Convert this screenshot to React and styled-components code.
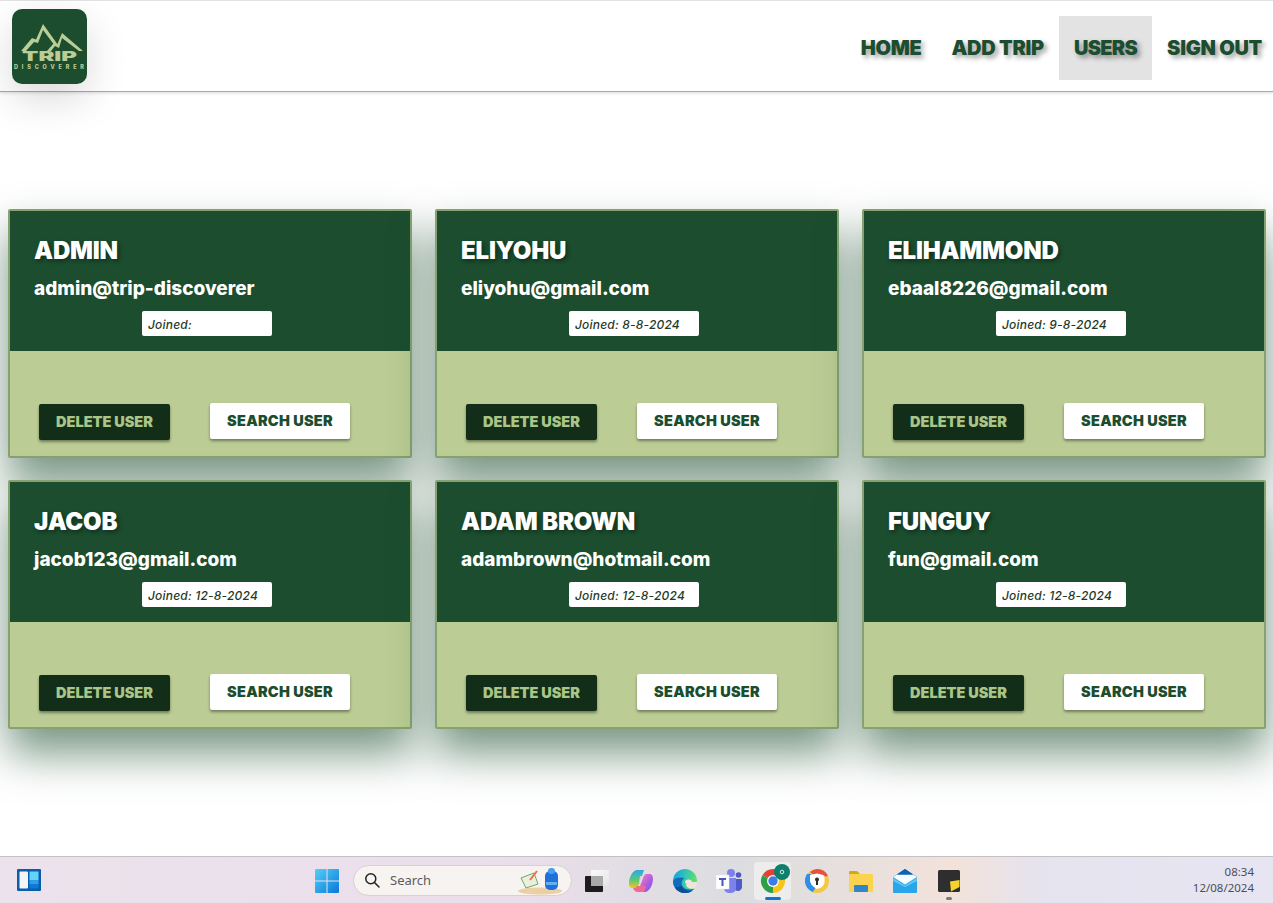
import React from 'react';
import styled, { createGlobalStyle } from 'styled-components';

const GlobalStyle = createGlobalStyle`
  html, body { margin: 0; padding: 0; background: #fff; }
  body { font-family: "Inter", "Liberation Sans", sans-serif; overflow: hidden; }
`;

const Page = styled.div`
  width: 1273px;
  height: 903px;
  display: flex;
  flex-direction: column;
  overflow: hidden;
  background: #fff;
`;

// Navbar
const Navbar = styled.header`
  height: 90px;
  flex: none;
  display: flex;
  justify-content: space-between;
  align-items: flex-start;
  border-top: 1px solid #e2e2e2;
  border-bottom: 1px solid #a9a9a9;
  box-shadow: 0 1px 3px rgba(0, 0, 0, 0.15);
  background: #fff;
  position: relative;
`;
const LogoBox = styled.div`
  width: 75px;
  height: 75px;
  margin: 8px 0 0 12px;
  border-radius: 10px;
  background: #1b4d2e;
  box-shadow: 0 15px 40px rgba(0, 0, 0, 0.15);
`;
const NavLinks = styled.nav`
  display: flex;
  margin: 15px -4px 0 0;
`;
const NavLink = styled.a`
  height: 64px;
  padding: 0 15px;
  display: flex;
  align-items: center;
  font-size: 20px;
  font-weight: 900;
  letter-spacing: ${props => props.$spacing};
  color: #1b4d2e;
  text-shadow: 3px 3px 5px rgba(0, 0, 0, 0.4);
  white-space: nowrap;
  background: ${props => (props.$active ? '#e3e3e3' : 'transparent')};
`;

// Users
const Main = styled.main`
  flex: 1;
  padding: 117px 7px 0 8px;
`;
const UserGrid = styled.div`
  display: grid;
  grid-template-columns: repeat(3, 404px);
  column-gap: 23px;
  row-gap: 22px;
`;
const Card = styled.article`
  height: 249px;
  box-sizing: border-box;
  display: flex;
  flex-direction: column;
  border: 2px solid #87a270;
  border-radius: 2px;
  background: #bbcd94;
  box-shadow: 0 24px 44px rgba(27, 77, 46, 0.6);
`;
const CardHead = styled.div`
  height: 140px;
  flex: none;
  box-sizing: border-box;
  padding: 27px 0 0 24px;
  background: #1b4d2e;
`;
const UserName = styled.h2`
  margin: 0;
  height: 26px;
  line-height: 26px;
  font-size: 24px;
  font-weight: 900;
  letter-spacing: -0.2px;
  color: #fff;
  text-shadow: 2px 2px 4px rgba(0, 0, 0, 0.4);
`;
const UserEmail = styled.p`
  margin: 13px 0 0;
  height: 24px;
  line-height: 24px;
  font-size: 19px;
  font-weight: 800;
  color: #fff;
`;
const Joined = styled.div`
  width: 130px;
  height: 25px;
  margin: 10px 0 0 108px;
  box-sizing: border-box;
  padding: 1px 0 0 6px;
  display: flex;
  align-items: center;
  border-radius: 2px;
  background: #fff;
  font-size: 12px;
  font-style: italic;
  font-weight: 500;
  letter-spacing: 0.2px;
  white-space: pre;
  color: #1f3a28;
`;
const CardActions = styled.div`
  flex: 1;
  display: flex;
  align-items: flex-start;
  padding: 52px 0 0 29px;
`;
const ActionButton = styled.button`
  width: ${props => (props.$danger ? 131 : 140)}px;
  height: 36px;
  margin: ${props => (props.$danger ? '1px 40px 0 0' : '0')};
  border: none;
  border-radius: 2px;
  padding: 0 0 2px;
  font-family: inherit;
  font-size: 14.5px;
  font-weight: 900;
  letter-spacing: ${props => (props.$danger ? '0' : '0.25px')};
  color: ${props => (props.$danger ? '#a9c587' : '#1b4d2e')};
  background: ${props => (props.$danger ? '#132e18' : '#fff')};
  box-shadow: 0 2px 3px rgba(0, 0, 0, 0.4);
`;

// Windows taskbar
const Taskbar = styled.footer`
  height: 47px;
  flex: none;
  box-sizing: border-box;
  display: flex;
  align-items: center;
  padding-left: 306px;
  position: relative;
  border-top: 1px solid #c4c0c4;
  background: linear-gradient(90deg, #ebe2ec 0%, #eadeea 40%, #dcdde0 58%, #f2e2da 75%, #e5e3ee 82%, #e6e5f1 100%);
`;
const WidgetSlot = styled.div`
  position: absolute;
  left: 17px;
  top: 12px;
  display: flex;
`;
const Slot = styled.div`
  width: 44px;
  height: 44px;
  flex: none;
  display: flex;
  align-items: center;
  justify-content: center;
  position: relative;
  margin-top: 1px;
`;
const StartSlot = styled(Slot)`
  width: 47px;
  justify-content: flex-start;
  padding-left: 9px;
  box-sizing: border-box;
`;
const ActiveSlot = styled(Slot)`
  &::before {
    content: '';
    position: absolute;
    left: 3px;
    top: 3px;
    width: 35px;
    height: 38px;
    border-radius: 4px;
    background: rgba(255, 255, 255, 0.45);
    box-shadow: 2px 0 0 rgba(255, 255, 255, 0.4);
  }
  &::after {
    content: '';
    position: absolute;
    left: 14px;
    bottom: 3px;
    width: 16px;
    height: 3px;
    border-radius: 2px;
    background: #0a74d6;
  }
  svg { position: relative; }
`;
const RunningDot = styled.span`
  position: absolute;
  left: 19px;
  bottom: 3px;
  width: 6px;
  height: 3px;
  border-radius: 2px;
  background: #7b7b7b;
`;
const SearchBox = styled.div`
  width: 219px;
  height: 31px;
  flex: none;
  box-sizing: border-box;
  display: flex;
  align-items: center;
  padding-left: 10px;
  margin-right: 3px;
  border: 1px solid #d6d2d2;
  border-radius: 16px;
  background: #f7f3f1;
  font-family: "Noto Sans", sans-serif;
  font-size: 13px;
  color: #5c5c5c;
  position: relative;
`;
const SearchLabel = styled.span`
  margin-left: 10px;
`;
const SearchArt = styled.svg`
  position: absolute;
  right: 5px;
  top: 1px;
`;
const Clock = styled.div`
  position: absolute;
  right: 19px;
  top: 7px;
  text-align: right;
  font-family: "Noto Sans", sans-serif;
  font-size: 11.5px;
  line-height: 16px;
  color: #4e4e55;
`;

const Logo = () => (
  <svg width="75" height="75" viewBox="0 0 75 75">
    <path fill="#bbcd94" d="M9 42 L20 29 L24 30.500 L31 15 L46 36 L43 37 L31 21 L26 34 L22 33 L14 42 Z" />
    <path fill="#bbcd94" d="M35 42 L42 34 L45 36 L50 24 L71 42 L67 42 L50 29 L47 39 L43 37 L39 42 Z" />
    <text x="37.5" y="52" textAnchor="middle" fontFamily="Inter, sans-serif" fontWeight="900" fontSize="13.500" textLength="55" lengthAdjust="spacingAndGlyphs" fill="#bbcd94">TRIP</text>
    <text x="37" y="60" textAnchor="middle" fontFamily="Inter, sans-serif" fontWeight="800" fontSize="5.500" textLength="70" lengthAdjust="spacing" fill="#bbcd94">DISCOVERER</text>
  </svg>
);

const WidgetsIcon = () => (
  <svg width="24" height="22" viewBox="0 0 24 22">
    <rect width="24" height="22" rx="1" fill="#0b5cab" />
    <rect x="2.5" y="2.5" width="8.5" height="17" rx="1" fill="#f4f4f6" />
    <rect x="12.5" y="2.5" width="9" height="9" fill="#62d3fb" />
    <rect x="12.5" y="11.5" width="9" height="4" fill="#2aa0ee" />
    <rect x="12.5" y="15.5" width="9" height="4" fill="#0d78d8" />
  </svg>
);

const WindowsIcon = () => (
  <svg width="24" height="24" viewBox="0 0 24 24">
    <defs>
      <linearGradient id="win" x1="0" y1="0" x2="1" y2="1">
        <stop offset="0" stopColor="#52d0f8" />
        <stop offset="1" stopColor="#0a78d8" />
      </linearGradient>
    </defs>
    <path fill="url(#win)" d="M0 1a1 1 0 0 1 1-1h10.500v11.500H0zM12.500 0H23a1 1 0 0 1 1 1v10.500H12.500zM0 12.500h11.500V24H1a1 1 0 0 1-1-1zM12.500 12.500H24V23a1 1 0 0 1-1 1H12.500z" />
  </svg>
);

const SearchIcon = () => (
  <svg width="16" height="16" viewBox="0 0 16 16" fill="none" stroke="#222" strokeWidth="1.5">
    <circle cx="6.8" cy="6.8" r="5" />
    <path d="M10.5 10.5 L15 15" strokeLinecap="round" />
  </svg>
);

const TaskViewIcon = () => (
  <svg width="24" height="22" viewBox="0 0 24 22">
    <defs>
      <linearGradient id="taskTop" x1="0" y1="0" x2="1" y2="1">
        <stop offset="0" stopColor="#fafafa" />
        <stop offset="1" stopColor="#e4e4e4" />
      </linearGradient>
    </defs>
    <rect x="0" y="6" width="18" height="16" rx="1" fill="#1d1d1d" />
    <rect x="6" y="0" width="18" height="16" rx="1" fill="url(#taskTop)" />
    <rect x="6" y="6" width="12" height="10" fill="#a9a9a9" />
  </svg>
);

const CopilotIcon = () => (
  <svg width="24" height="22" viewBox="0 0 24 22">
    <defs>
      <linearGradient id="copA" x1="0" y1="0" x2="0" y2="1">
        <stop offset="0" stopColor="#2fa8e8" />
        <stop offset="0.55" stopColor="#58c878" />
        <stop offset="1" stopColor="#f5c518" />
      </linearGradient>
      <linearGradient id="copB" x1="0" y1="0" x2="1" y2="1">
        <stop offset="0" stopColor="#f58ac0" />
        <stop offset="0.6" stopColor="#b05be0" />
        <stop offset="1" stopColor="#5a5ee8" />
      </linearGradient>
    </defs>
    <path fill="url(#copA)" d="M8 0h7l-4.500 13c-1 3-2 5-4.500 5H4c-3 0-4-2-4-5C0 7 4 0 8 0z" />
    <path fill="url(#copB)" d="M16 22H9l4.500-13c1-3 2-5 4.500-5h2c3 0 4 2 4 5 0 6-4 13-8 13z" />
    <path fill="#f0689a" d="M9 22h6l2-6H8c-1 2-3 2-4 2 1 3 3 4 5 4z" />
    <path fill="#f7d9e8" d="M11 6h3l-1 5-3 2z" opacity="0.8" />
  </svg>
);

const EdgeIcon = () => (
  <svg width="24" height="24" viewBox="0 0 24 24">
    <defs>
      <linearGradient id="edgeA" x1="0" y1="0.2" x2="1" y2="0.5">
        <stop offset="0" stopColor="#1b9de2" />
        <stop offset="0.5" stopColor="#33c6b4" />
        <stop offset="1" stopColor="#6fdf62" />
      </linearGradient>
    </defs>
    <circle cx="12" cy="12" r="12" fill="url(#edgeA)" />
    <path fill="#0f6cbd" d="M0 12c0 7 5 12 12 12 4 0 7-1.500 9.500-4.500-5 2-11 1-12.500-3.500-1-3 .5-6 3-7C8 8 2 8 0 12z" />
    <path fill="#0c4f96" d="M2 18c2 4 6 6 10 6 3 0 5-1 7-2-5 0-9-1-10.500-5C6 18 4 18 2 18z" />
    <path fill="#f1e4de" d="M24 15H14.500c-1.500 0-2.500-.8-2.500-2 0-1.500 1.500-2.500 3.500-2.500 2.500 0 3.500 1.200 3.500 2.500h5z" />
    <path fill="#f1e4de" d="M13 15h11c-.5 1.500-1 3-2.500 4.500-4 1-8.500-.5-8.500-4.500z" />
  </svg>
);

const TeamsIcon = () => (
  <svg width="26" height="24" viewBox="0 0 26 24">
    <circle cx="15" cy="4" r="4" fill="#7b83eb" />
    <circle cx="22.500" cy="6" r="2.800" fill="#5059c9" />
    <path fill="#5059c9" d="M18 10h8v8c0 2-2 4-4 4s-4-1-4-3z" />
    <path fill="#7b83eb" d="M8 9h12v10c0 3-2 5-6 5s-6-2-6-5z" />
    <rect x="0" y="6" width="13" height="14" fill="#fff" stroke="#e6e6e6" strokeWidth="0.5" />
    <path fill="#4b53bc" d="M3 9h7v2H7.500v6h-2v-6H3z" />
  </svg>
);

const ChromeIcon = () => (
  <svg width="34" height="34" viewBox="0 0 34 34">
    <path fill="#e34133" d="M17 17 L6.600 11 A12 12 0 0 1 27.400 11 Z" />
    <path fill="#f5c518" d="M17 17 L27.400 11 A12 12 0 0 1 17 29 Z" />
    <path fill="#2f9e44" d="M17 17 L17 29 A12 12 0 0 1 6.600 11 Z" />
    <circle cx="17" cy="17" r="6" fill="#fff" />
    <circle cx="17" cy="17" r="4.700" fill="#3b7de8" />
    <circle cx="26" cy="8" r="8" fill="#0f7f6c" />
    <circle cx="26" cy="8" r="1.800" fill="none" stroke="#cfeee6" strokeWidth="1" />
  </svg>
);

const ShieldIcon = () => (
  <svg width="24" height="24" viewBox="0 0 24 24">
    <circle cx="12" cy="12" r="12" fill="#f5c842" />
    <path fill="#e8503f" d="M12 0A12 12 0 0 1 23 7L12 9 5 3a12 12 0 0 1 7-3z" />
    <path fill="#2d8fe8" d="M2 5a12 12 0 0 0 6 18l4-7-6-11z" />
    <path fill="#fff" d="M5 6 L12 4.500 C15 5 18 5.500 19.500 7 V13 C19 17 16 19 12 20 C8 18 5 15 5 11 Z" />
    <circle cx="12" cy="10.500" r="2" fill="#2b2b2b" />
    <rect x="11" y="11" width="2" height="5" fill="#2b2b2b" />
  </svg>
);

const FolderIcon = () => (
  <svg width="24" height="22" viewBox="0 0 24 22">
    <path fill="#d8a514" d="M0 2a1 1 0 0 1 1-1h7l3 3v4H0z" />
    <rect x="0" y="4" width="24" height="18" rx="1" fill="#fbd34f" />
    <rect x="5" y="15" width="14" height="7" rx="1" fill="#2f86c8" />
  </svg>
);

const MailIcon = () => (
  <svg width="24" height="24" viewBox="0 0 24 24">
    <path fill="#0a64b5" d="M0 8L12 0l12 8-12 9z" />
    <rect x="0" y="8" width="24" height="16" rx="1" fill="#2aa5ea" />
    <path fill="#f6fbff" d="M0 8l4-2.600h16L24 8l-12 7.500z" />
    <path fill="#0a64b5" d="M4 5.400L12 0l8 5.400z" />
    <path fill="#5cc8f7" d="M0 9l12 7.500L24 9v3l-12 6L0 12z" />
  </svg>
);

const StickyIcon = () => (
  <svg width="22" height="22" viewBox="0 0 22 22">
    <rect width="22" height="22" rx="1.500" fill="#2e2e2e" />
    <path fill="#f6d32d" d="M12 11.500L21.500 10v7L13 21.500z" />
  </svg>
);

const Backpack = () => (
  <SearchArt width="48" height="28" viewBox="0 0 48 28">
    <ellipse cx="22" cy="24" rx="22" ry="3.500" fill="#eccfa4" />
    <path fill="#e9f1de" stroke="#6fa868" strokeWidth="1" d="M3 11l13-5 4 11-12 4z" />
    <path stroke="#e8704a" strokeWidth="2" d="M12 13l7-9" />
    <rect x="27" y="4" width="13" height="19" rx="5" fill="#1f70d8" />
    <rect x="30" y="1" width="7" height="6" rx="3" fill="#4b9df0" />
    <rect x="28" y="15" width="11" height="3" fill="#5fb0f5" />
  </SearchArt>
);

const users = [
  { name: 'ADMIN', email: 'admin@trip-discoverer', joined: '' },
  { name: 'ELIYOHU', email: 'eliyohu@gmail.com', joined: '8-8-2024' },
  { name: 'ELIHAMMOND', email: 'ebaal8226@gmail.com', joined: '9-8-2024' },
  { name: 'JACOB', email: 'jacob123@gmail.com', joined: '12-8-2024' },
  { name: 'ADAM BROWN', email: 'adambrown@hotmail.com', joined: '12-8-2024' },
  { name: 'FUNGUY', email: 'fun@gmail.com', joined: '12-8-2024' },
];

const UserCard = ({ user }) => (
  <Card>
    <CardHead>
      <UserName>{user.name}</UserName>
      <UserEmail>{user.email}</UserEmail>
      <Joined>Joined: {user.joined}</Joined>
    </CardHead>
    <CardActions>
      <ActionButton $danger>DELETE USER</ActionButton>
      <ActionButton>SEARCH USER</ActionButton>
    </CardActions>
  </Card>
);

const App = () => (
  <Page>
    <GlobalStyle />
    <Navbar>
      <LogoBox><Logo /></LogoBox>
      <NavLinks>
        <NavLink $spacing="-0.3px">HOME</NavLink>
        <NavLink $spacing="-0.3px">ADD TRIP</NavLink>
        <NavLink $spacing="-0.7px" $active>USERS</NavLink>
        <NavLink $spacing="-0.3px">SIGN OUT</NavLink>
      </NavLinks>
    </Navbar>
    <Main>
      <UserGrid>
        {users.map(user => <UserCard key={user.email} user={user} />)}
      </UserGrid>
    </Main>
    <Taskbar>
      <WidgetSlot><WidgetsIcon /></WidgetSlot>
      <StartSlot><WindowsIcon /></StartSlot>
      <SearchBox>
        <SearchIcon />
        <SearchLabel>Search</SearchLabel>
        <Backpack />
      </SearchBox>
      <Slot><TaskViewIcon /></Slot>
      <Slot><CopilotIcon /></Slot>
      <Slot><EdgeIcon /></Slot>
      <Slot><TeamsIcon /></Slot>
      <ActiveSlot><ChromeIcon /></ActiveSlot>
      <Slot><ShieldIcon /></Slot>
      <Slot><FolderIcon /></Slot>
      <Slot><MailIcon /></Slot>
      <Slot><StickyIcon /><RunningDot /></Slot>
      <Clock>08:34<br />12/08/2024</Clock>
    </Taskbar>
  </Page>
);

export default App;
